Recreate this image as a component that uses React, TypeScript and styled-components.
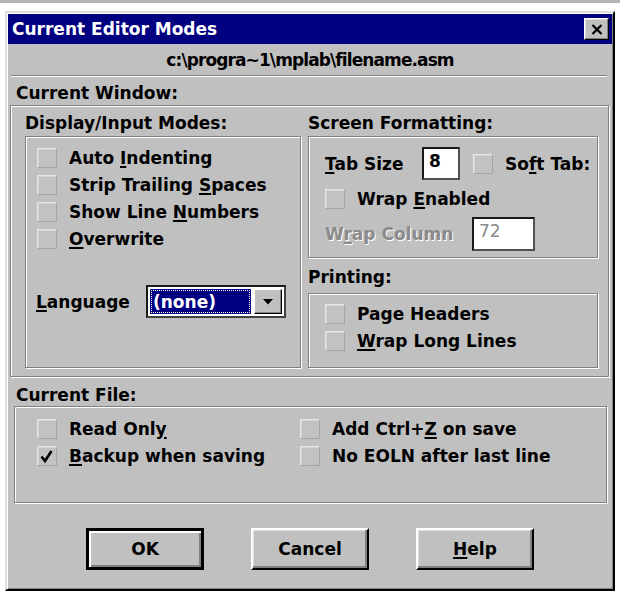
import React from "react";
import styled, { createGlobalStyle, css } from "styled-components";

const GlobalStyle = createGlobalStyle`
  html, body {
    margin: 0;
    padding: 0;
    background: #fff;
  }
  body {
    font-family: "DejaVu Sans", "Liberation Sans", Arial, sans-serif;
  }
`;

const Page = styled.div`
  width: 620px;
  height: 598px;
  box-sizing: border-box;
  border-top: 3px solid #b4b4b4;
  padding: 8px 0 0 5px;
`;

const Window = styled.div`
  width: 610px;
  height: 580px;
  box-sizing: border-box;
  background: #c0c0c0;
  border: 2px solid;
  border-color: #dfdfdf #000 #000 #dfdfdf;
  box-shadow: inset 1px 1px 0 #fff, inset -1px -1px 0 #808080;
  padding: 1px;
  display: flex;
  flex-direction: column;
  font-family: "DejaVu Sans", "Liberation Sans", sans-serif;
  font-weight: bold;
  font-size: 17px;
  color: #000;
`;

const TitleBar = styled.div`
  flex: none;
  height: 30px;
  background: #000080;
  color: #fff;
  display: flex;
  align-items: center;
  justify-content: space-between;
  padding: 0 3px 0 4px;
`;

const CloseButton = styled.div`
  width: 25px;
  height: 22px;
  box-sizing: border-box;
  background: #c0c0c0;
  border: 1px solid;
  border-color: #fff #000 #000 #fff;
  box-shadow: inset -1px -1px 0 #808080, inset 1px 1px 0 #dfdfdf;
  display: flex;
  align-items: center;
  justify-content: center;
`;

const PathLine = styled.div`
  flex: none;
  height: 31px;
  display: flex;
  align-items: center;
  justify-content: center;
  letter-spacing: -0.9px;
  font-size: 17px;
`;

const Divider = styled.div`
  flex: none;
  height: 0;
  margin: 0 5px 0 3px;
  border-top: 1px solid #808080;
  border-bottom: 1px solid #fff;
`;

const Caption = styled.div<{ $h: number; $top: number; $left?: number }>`
  flex: none;
  height: ${(p) => p.$h}px;
  box-sizing: border-box;
  padding-top: ${(p) => p.$top}px;
  padding-left: ${(p) => p.$left ?? 0}px;
  display: flex;
  align-items: center;
  white-space: nowrap;
`;

const Frame = styled.div<{ $h?: number }>`
  box-sizing: border-box;
  ${(p) => p.$h && css`height: ${p.$h}px;`}
  border: 1px solid #808080;
  box-shadow: inset 1px 1px 0 #fff, 1px 1px 0 #fff;
  overflow: hidden;
`;

const WindowPanel = styled(Frame)`
  flex: none;
  margin: 0 3px 0 2px;
  padding: 0 10px 8px 14px;
  display: grid;
  grid-template-columns: 276px 290px;
  column-gap: 7px;
`;

const Column = styled.div`
  display: flex;
  flex-direction: column;
`;

const ModesBox = styled(Frame)`
  padding: 7px 0 0 11px;
`;

const FormatBox = styled(Frame)`
  padding: 9px 0 0 16px;
  display: flex;
  flex-direction: column;
  gap: 6px;
`;

const PrintBox = styled(Frame)`
  padding: 6px 0 0 16px;
`;

const FileBox = styled(Frame)`
  flex: none;
  margin: 0 5px 0 6px;
  padding: 8px 0 0 22px;
  display: grid;
  grid-template-columns: 263px 1fr;
  grid-auto-rows: 27px;
`;

const CheckRow = styled.div<{ $h?: number }>`
  height: ${(p) => p.$h ?? 27}px;
  display: flex;
  align-items: center;
  gap: 12px;
  white-space: nowrap;
`;

const Box = styled.span`
  flex: none;
  width: 20px;
  height: 20px;
  box-sizing: border-box;
  background: #c2c2c2;
  border: 1px solid;
  border-color: #e6e6e6 #a4a4a4 #a4a4a4 #e6e6e6;
  box-shadow: inset 1px 1px 0 #d4d4d4;
  display: flex;
  align-items: center;
  justify-content: center;
`;

const FieldRow = styled.div<{ $h: number }>`
  height: ${(p) => p.$h}px;
  display: flex;
  align-items: center;
  white-space: nowrap;
`;

const FieldLabel = styled.span<{ $w: number; $disabled?: boolean }>`
  flex: none;
  width: ${(p) => p.$w}px;
  ${(p) =>
    p.$disabled &&
    css`
      color: #8a8a8a;
      text-shadow: 1px 1px 0 #fff;
    `}
`;

const TextField = styled.div<{ $w: number; $h: number; $disabled?: boolean }>`
  flex: none;
  width: ${(p) => p.$w}px;
  height: ${(p) => p.$h}px;
  box-sizing: border-box;
  background: #fff;
  border: 2px solid;
  border-color: #1a1a1a #505050 #505050 #1a1a1a;
  padding: 0 0 0 5px;
  display: flex;
  align-items: flex-start;
  line-height: 24px;
  color: ${(p) => (p.$disabled ? "#8a8a8a" : "#000")};
  font-weight: ${(p) => (p.$disabled ? "normal" : "bold")};
`;

const SoftTab = styled.span`
  margin-left: 13px;
  display: flex;
  align-items: center;
  gap: 12px;
`;

const LanguageRow = styled.div`
  margin-top: 33px;
  height: 33px;
  display: flex;
  align-items: center;
  margin-left: -1px;
`;

const Combo = styled.div`
  width: 140px;
  height: 33px;
  box-sizing: border-box;
  background: #fff;
  border: 2px solid;
  border-color: #1a1a1a #404040 #404040 #1a1a1a;
  padding: 2px;
  display: flex;
  gap: 3px;
`;

const ComboValue = styled.div`
  flex: 1;
  background: #000080;
  color: #fff;
  outline: 1px dotted #fff;
  outline-offset: -2px;
  padding-left: 3px;
  display: flex;
  align-items: center;
`;

const ComboArrow = styled.div`
  width: 28px;
  box-sizing: border-box;
  background: #c0c0c0;
  border: 1px solid;
  border-color: #fff #000 #000 #fff;
  box-shadow: inset -1px -1px 0 #808080;
  display: flex;
  align-items: center;
  justify-content: center;
`;

const ButtonRow = styled.div`
  flex: none;
  margin-top: 25px;
  display: flex;
  justify-content: center;
  gap: 47px;
`;

const Button = styled.div<{ $default?: boolean }>`
  width: 118px;
  height: 42px;
  box-sizing: border-box;
  background: #c0c0c0;
  border: 2px solid;
  border-color: #fff #000 #000 #fff;
  box-shadow: inset -2px -2px 0 #808080, inset 1px 1px 0 #dfdfdf;
  display: flex;
  align-items: center;
  justify-content: center;
  ${(p) =>
    p.$default &&
    css`
      border: 3px solid #000;
      box-shadow: inset 2px 2px 0 #fff, inset -2px -2px 0 #808080;
    `}
`;

const Mn = styled.u`
  text-decoration-thickness: 2px;
  text-underline-offset: 2px;
`;

const label = (text: string, at: number) =>
  at < 0 ? (
    text
  ) : (
    <>
      {text.slice(0, at)}
      <Mn>{text[at]}</Mn>
      {text.slice(at + 1)}
    </>
  );

const Check = ({ text, at = -1, checked = false, h }: { text: string; at?: number; checked?: boolean; h?: number }) => (
  <CheckRow $h={h}>
    <Box>
      {checked && (
        <svg width="16" height="16" viewBox="0 0 16 16">
          <path d="M2.5 8.5 L6 13 L12.5 3" fill="none" stroke="#000" strokeWidth="2.6" />
        </svg>
      )}
    </Box>
    <span>{label(text, at)}</span>
  </CheckRow>
);

export default function App() {
  return (
    <Page>
      <GlobalStyle />
      <Window>
        <TitleBar>
          <span>Current Editor Modes</span>
          <CloseButton>
            <svg width="12" height="11" viewBox="0 0 12 11">
              <path d="M1.5 1 L10.5 10 M10.5 1 L1.5 10" stroke="#000" strokeWidth="2.2" />
            </svg>
          </CloseButton>
        </TitleBar>
        <PathLine>c:\progra~1\mplab\filename.asm</PathLine>
        <Divider />
        <Caption $h={28} $top={4} $left={8}>Current Window:</Caption>
        <WindowPanel>
          <Column>
            <Caption $h={30} $top={4}>Display/Input Modes:</Caption>
            <ModesBox $h={232}>
              <Check text="Auto Indenting" at={5} />
              <Check text="Strip Trailing Spaces" at={15} />
              <Check text="Show Line Numbers" at={10} />
              <Check text="Overwrite" at={0} />
              <LanguageRow>
                <FieldLabel $w={110}>{label("Language", 0)}</FieldLabel>
                <Combo>
                  <ComboValue>(none)</ComboValue>
                  <ComboArrow>
                    <svg width="10" height="6" viewBox="0 0 10 6">
                      <path d="M0 0 H10 L5 5.5 Z" fill="#000" />
                    </svg>
                  </ComboArrow>
                </Combo>
              </LanguageRow>
            </ModesBox>
          </Column>
          <Column>
            <Caption $h={30} $top={4}>Screen Formatting:</Caption>
            <FormatBox $h={122}>
              <FieldRow $h={35}>
                <FieldLabel $w={97}>{label("Tab Size", 0)}</FieldLabel>
                <TextField $w={38} $h={33}>8</TextField>
                <SoftTab>
                  <Box />
                  <span>{label("Soft Tab:", 2)}</span>
                </SoftTab>
              </FieldRow>
              <Check text="Wrap Enabled" at={5} h={24} />
              <FieldRow $h={34}>
                <FieldLabel $w={147} $disabled>
                  {label("Wrap Column", 1)}
                </FieldLabel>
                <TextField $w={63} $h={34} $disabled>
                  72
                </TextField>
              </FieldRow>
            </FormatBox>
            <Caption $h={35} $top={3}>Printing:</Caption>
            <PrintBox $h={75}>
              <Check text="Page Headers" />
              <Check text="Wrap Long Lines" at={0} />
            </PrintBox>
          </Column>
        </WindowPanel>
        <Caption $h={29} $top={6} $left={8}>Current File:</Caption>
        <FileBox $h={97}>
          <Check text="Read Only" at={8} />
          <Check text="Add Ctrl+Z on save" at={9} />
          <Check text="Backup when saving" at={0} checked />
          <Check text="No EOLN after last line" />
        </FileBox>
        <ButtonRow>
          <Button $default>OK</Button>
          <Button>Cancel</Button>
          <Button>{label("Help", 0)}</Button>
        </ButtonRow>
      </Window>
    </Page>
  );
}
